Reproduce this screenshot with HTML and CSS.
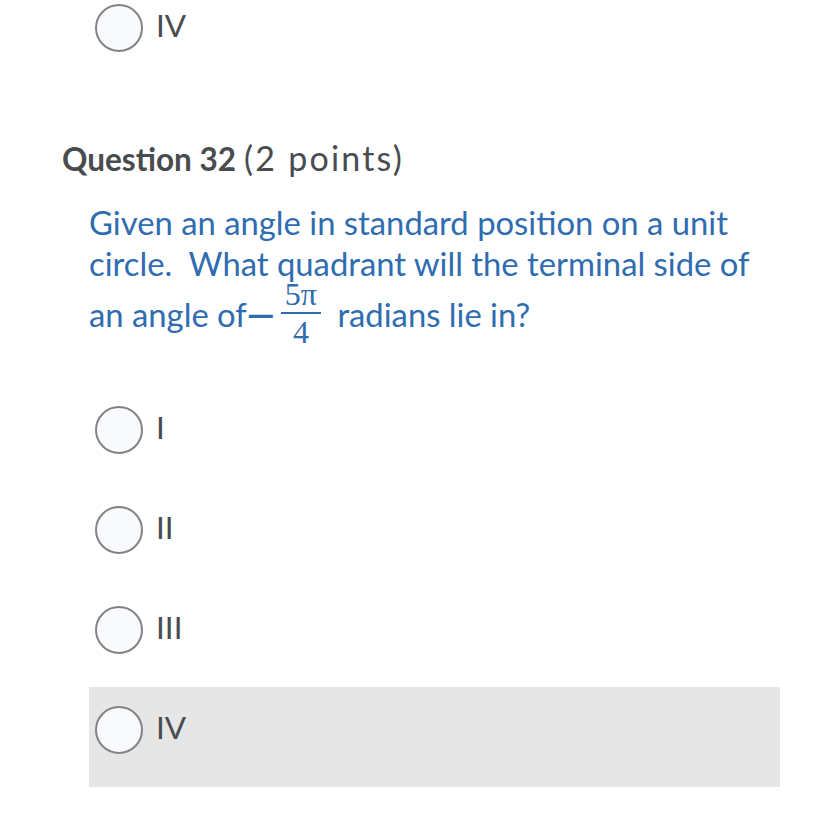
FILE: index.html
```html
<!DOCTYPE html>
<html>
<head>
<meta charset="utf-8">
<link rel="stylesheet" href="styles.css">
</head>
<body>
<div class="page">
  <div class="options prev">
    <label class="option"><span class="radio"></span><span class="opt-text">IV</span></label>
  </div>

  <section class="question">
    <h2 class="q-title"><span class="q-num">Question 32</span> <span class="q-pts">(2 points)</span></h2>
    <p class="q-text">Given an angle in standard position on a unit circle.&nbsp; What quadrant will the terminal side of an angle of<span class="minus">—</span><span class="frac"><span class="num">5π</span><span class="den">4</span></span> radians lie in?</p>

    <div class="options">
      <label class="option"><span class="radio"></span><span class="opt-text">I</span></label>
      <label class="option"><span class="radio"></span><span class="opt-text">II</span></label>
      <label class="option"><span class="radio"></span><span class="opt-text">III</span></label>
      <label class="option hover"><span class="radio"></span><span class="opt-text">IV</span></label>
    </div>
  </section>
</div>
</body>
</html>
```

FILE: styles.css
```css
html, body {
  margin: 0;
  padding: 0;
  background: #ffffff;
}
body {
  font-family: Lato, "Open Sans", sans-serif;
  color: #494c4e;
}
.page {
  width: 828px;
  height: 828px;
  overflow: hidden;
}
.prev {
  margin-top: -15px;
}
.options {
  display: flex;
  flex-direction: column;
  margin-left: 89px;
  width: 691px;
}
.option {
  display: flex;
  align-items: flex-start;
  height: 100px;
  box-sizing: border-box;
  padding: 19px 0 0 6px;
}
.option.hover {
  background: #e6e6e6;
}
.radio {
  width: 44px;
  height: 44px;
  border: 2px solid #838383;
  border-radius: 50%;
  background: #f8fafe;
  flex: none;
}
.opt-text {
  font-size: 31.5px;
  line-height: 42px;
  margin-left: 13px;
  color: #494c4e;
}
.q-title {
  margin: 54px 0 0 62px;
  font-weight: normal;
  font-size: 31.5px;
  line-height: 40px;
}
.q-num {
  font-weight: 700;
}
.q-pts {
  font-size: 34px;
  letter-spacing: 2.2px;
  line-height: 1;
}
.q-text {
  margin: 23px 0 40px 89px;
  width: 680px;
  font-size: 32.8px;
  line-height: 41px;
  color: #2f6cb0;
}
.minus {
  font-weight: 900;
  font-size: 35px;
  line-height: 1;
}
.frac {
  display: inline-flex;
  flex-direction: column;
  align-items: center;
  vertical-align: 22px;
  margin: 0 8px 0 6px;
  font-family: "Liberation Serif", serif;
  font-size: 32px;
}
.num {
  padding: 0 4px 8px;
  border-bottom: 2px solid #2f6cb0;
  line-height: 20px;
}
.den {
  padding-top: 3px;
  line-height: 30px;
}
```
